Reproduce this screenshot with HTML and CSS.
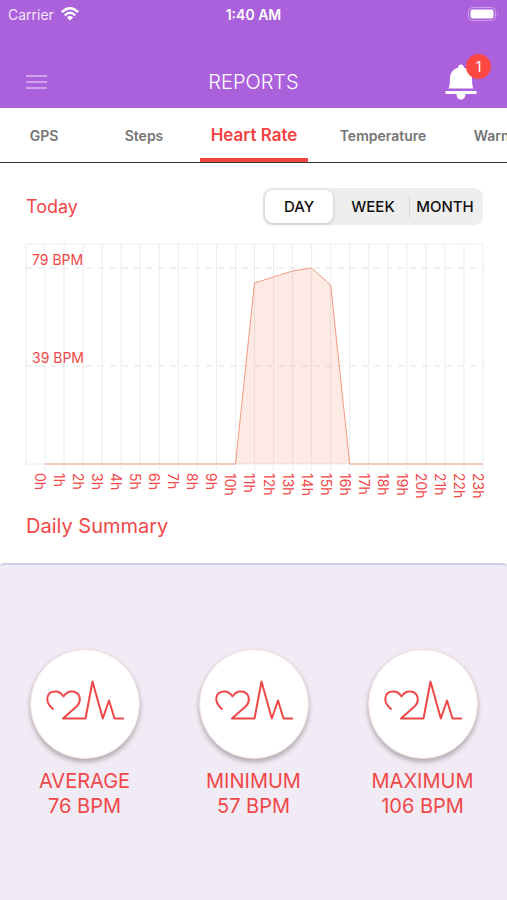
FILE: index.html
```html
<!DOCTYPE html>
<html lang="en">
<head>
  <meta charset="UTF-8">
  <meta name="viewport" content="width=device-width, initial-scale=1.0">
  <title>Reports</title>
  <link rel="stylesheet" href="styles.css">
</head>
<body>
  <svg width="0" height="0" class="sprite" aria-hidden="true">
    <symbol id="heart-pulse" viewBox="0 0 80 48">
      <path d="M8.500 29.500C-1 22 1 11.500 10.500 11.500C14 11.500 16.500 13.500 18.500 16.500C20.500 13.500 23 11.500 26.500 11.500C35 11.500 37.500 20.500 31.500 26.500L18 38.500H40.500L47.500 1.500L57.800 38.500L64 20.500L69.500 38.500H79" fill="none" stroke="currentColor" stroke-width="2" stroke-linejoin="round"/>
    </symbol>
  </svg>

  <header class="header">
    <div class="status-bar">
      <div class="carrier">
        <span>Carrier</span>
        <svg width="18" height="14" viewBox="0 0 18 14" aria-hidden="true">
          <g fill="none" stroke="#fff" stroke-width="2.400">
            <path d="M0.800 5.200Q9 -2.600 17.200 5.200"/>
            <path d="M3.800 8.300Q9 3.300 14.200 8.300"/>
          </g>
          <path d="M9 13.600L5.900 10.400Q9 7.800 12.100 10.400Z" fill="#fff"/>
        </svg>
      </div>
      <time class="clock">1:40 AM</time>
      <svg class="battery" width="31" height="14" viewBox="0 0 31 14" aria-hidden="true">
        <rect x="0.500" y="0.500" width="27" height="13" rx="4" fill="none" stroke="#cf9fec"/>
        <rect x="2.500" y="2.500" width="23" height="9" rx="2" fill="#fff"/>
        <path d="M29 5Q31 7 29 9Z" fill="#cf9fec"/>
      </svg>
    </div>
    <div class="title-bar">
      <button class="icon-button" aria-label="Menu">
        <svg width="21" height="16" viewBox="0 0 21 16"><path d="M0 2H21M0 8H21M0 14H21" stroke="#dcb8f2" stroke-width="1.500"/></svg>
      </button>
      <h1>REPORTS</h1>
      <button class="icon-button bell" aria-label="Notifications">
        <svg width="32" height="36" viewBox="0 0 32 36" fill="#fff">
          <path d="M3.500 24.500C5 22 4.800 18 5 14C5.300 8.500 8.500 5 13 3.800C13.200 1.500 14.500 0.500 16 0.500S18.800 1.500 19 3.800C23.500 5 26.700 8.500 27 14C27.200 18 27 22 28.500 24.500Z"/>
          <path d="M0.500 27H31.500V30H20.500C20.500 33.500 18.800 35.500 16 35.500S11.500 33.500 11.500 30H0.500Z"/>
        </svg>
        <span class="badge">1</span>
      </button>
    </div>
  </header>

  <nav class="tabs">
    <a href="#gps">GPS</a>
    <a href="#steps">Steps</a>
    <a href="#heart-rate" class="active">Heart Rate</a>
    <a href="#temperature">Temperature</a>
    <a href="#warnings">Warnings</a>
  </nav>

  <main class="report">
    <div class="report-head">
      <h2>Today</h2>
      <div class="segmented">
        <input type="radio" name="range" id="day" checked><label for="day">DAY</label>
        <input type="radio" name="range" id="week"><label for="week">WEEK</label>
        <input type="radio" name="range" id="month"><label for="month">MONTH</label>
      </div>
    </div>

    <div class="chart">
      <svg class="plot" viewBox="0 0 456 220" preserveAspectRatio="none" aria-hidden="true">
        <path class="grid" d="M0 0V220M19 0V226M38 0V226M57 0V226M76 0V226M95 0V226M114 0V226M133 0V226M152 0V226M171 0V226M190 0V226M209 0V226M228 0V226M247 0V226M266 0V226M285 0V226M304 0V226M323 0V226M342 0V226M361 0V226M380 0V226M399 0V226M418 0V226M437 0V226M456 0V226M0 0H456M0 220H456"/>
        <path class="guide" d="M0 24H456M0 122H456"/>
        <path class="area" d="M209 220L228 39L266 27L285 24L304 41L323 220Z"/>
        <path class="line" d="M19 220H209L228 39L266 27L285 24L304 41L323 220H456"/>
      </svg>
      <span class="level level-high">79 BPM</span>
      <span class="level level-mid">39 BPM</span>
    </div>
    <ol class="hours">
      <li>0h</li><li>1h</li><li>2h</li><li>3h</li><li>4h</li><li>5h</li>
      <li>6h</li><li>7h</li><li>8h</li><li>9h</li><li>10h</li><li>11h</li>
      <li>12h</li><li>13h</li><li>14h</li><li>15h</li><li>16h</li><li>17h</li>
      <li>18h</li><li>19h</li><li>20h</li><li>21h</li><li>22h</li><li>23h</li>
    </ol>
    <h2 class="summary-title">Daily Summary</h2>
  </main>

  <section class="summary">
    <div class="stat">
      <div class="disc"><svg width="80" height="48"><use href="#heart-pulse"/></svg></div>
      <p>AVERAGE<br>76 BPM</p>
    </div>
    <div class="stat">
      <div class="disc"><svg width="80" height="48"><use href="#heart-pulse"/></svg></div>
      <p>MINIMUM<br>57 BPM</p>
    </div>
    <div class="stat">
      <div class="disc"><svg width="80" height="48"><use href="#heart-pulse"/></svg></div>
      <p>MAXIMUM<br>106 BPM</p>
    </div>
  </section>
</body>
</html>
```
FILE: styles.css
```css
* {
  margin: 0;
  padding: 0;
  box-sizing: border-box;
}
body {
  min-height: 100vh;
  display: flex;
  flex-direction: column;
  background-color: #fff;
  color: #f04848;
  font-family: Inter, "Liberation Sans", sans-serif;
}
.sprite {
  position: absolute;
}
.header {
  background-color: #ab61db;
  color: #fff;
}
.status-bar {
  display: grid;
  grid-template-columns: 1fr auto 1fr;
  align-items: center;
  height: 28px;
  padding: 0 8px;
  font-size: 14px;
}
.carrier {
  display: flex;
  align-items: center;
  gap: 7px;
  color: #f3e6fb;
}
.clock {
  font-weight: 600;
}
.battery {
  justify-self: end;
}
.title-bar {
  display: grid;
  grid-template-columns: 1fr auto 1fr;
  align-items: center;
  height: 80px;
  padding: 28px 26px 0;
}
.title-bar h1 {
  font-size: 20px;
  font-weight: 300;
}
.icon-button {
  display: flex;
  justify-self: start;
  border: none;
  background: none;
  cursor: pointer;
}
.bell {
  position: relative;
  justify-self: end;
  margin-right: 4px;
}
.badge {
  position: absolute;
  top: -10px;
  right: -14px;
  width: 25px;
  height: 25px;
  border-radius: 50%;
  background-color: #fd4743;
  color: #fff;
  font: 14px/25px Inter, sans-serif;
  text-align: center;
}
.tabs {
  display: grid;
  grid-template-columns: 88px 112px 108px 150px 96px;
  height: 55px;
  border-bottom: 1px solid #333;
  overflow: hidden;
}
.tabs a {
  display: flex;
  align-items: center;
  justify-content: center;
  border-bottom: 4px solid transparent;
  padding-top: 4px;
  color: #757575;
  font-size: 14px;
  font-weight: 600;
  text-decoration: none;
}
.tabs .active {
  border-color: #f44340;
  color: #f44340;
  font-size: 17px;
}
.report {
  padding: 25px 24px 24px 26px;
}
.report-head {
  display: flex;
  align-items: center;
  justify-content: space-between;
  height: 37px;
  margin-bottom: 19px;
}
h2 {
  font-size: 18px;
  font-weight: 400;
}
.segmented {
  display: grid;
  grid-template-columns: 0 1fr 0 1fr 0 1fr;
  width: 220px;
  height: 37px;
  padding: 2px;
  border-radius: 9px;
  background-color: #eee;
}
.segmented input {
  appearance: none;
  width: 0;
}
.segmented label {
  display: flex;
  align-items: center;
  justify-content: center;
  border-radius: 8px;
  color: #111;
  font-size: 15px;
  font-weight: 500;
  cursor: pointer;
}
.segmented input:checked + label {
  margin-right: 4px;
  background-color: #fff;
  box-shadow: 0 1px 4px rgba(0, 0, 0, 0.2);
}
.segmented label:last-child {
  background: linear-gradient(#d8d8d8, #d8d8d8) 0 50% / 1px 22px no-repeat;
  border-radius: 0;
}
.chart {
  position: relative;
  height: 220px;
}
.plot {
  display: block;
  width: 100%;
  height: 100%;
  overflow: visible;
}
.plot path {
  fill: none;
  vector-effect: non-scaling-stroke;
}
.plot .grid {
  stroke: #ececec;
  shape-rendering: crispEdges;
}
.plot .guide {
  stroke: #e2e2e2;
  stroke-dasharray: 6 6;
}
.plot .area {
  fill: rgba(250, 128, 100, 0.17);
}
.plot .line {
  stroke: #f39a80;
}
.level {
  position: absolute;
  left: 6px;
  font-size: 14px;
  line-height: 18px;
}
.level-high {
  top: 7px;
}
.level-mid {
  top: 105px;
}
.hours {
  display: grid;
  grid-template-columns: repeat(24, 1fr);
  height: 36px;
  padding-top: 9px;
  list-style: none;
  font-size: 14px;
  line-height: 10px;
}
.hours li {
  writing-mode: vertical-rl;
  white-space: nowrap;
}
.summary-title {
  margin-top: 13px;
  font-size: 20px;
  line-height: 26px;
}
.summary {
  flex: 1;
  display: grid;
  grid-template-columns: repeat(3, 1fr);
  padding-top: 84px;
  border-top: 2px solid #d3cce2;
  border-radius: 4px 4px 0 0;
  background-color: #f0ebf4;
}
.stat {
  display: flex;
  flex-direction: column;
  align-items: center;
  gap: 10px;
}
.disc {
  display: flex;
  align-items: center;
  justify-content: center;
  width: 110px;
  height: 110px;
  border: 1px solid #f6dede;
  border-radius: 50%;
  background-color: #fff;
  box-shadow: 0 3px 5px rgba(0, 0, 0, 0.28);
}
.stat p {
  font-size: 20px;
  line-height: 25px;
  text-align: center;
}
```
